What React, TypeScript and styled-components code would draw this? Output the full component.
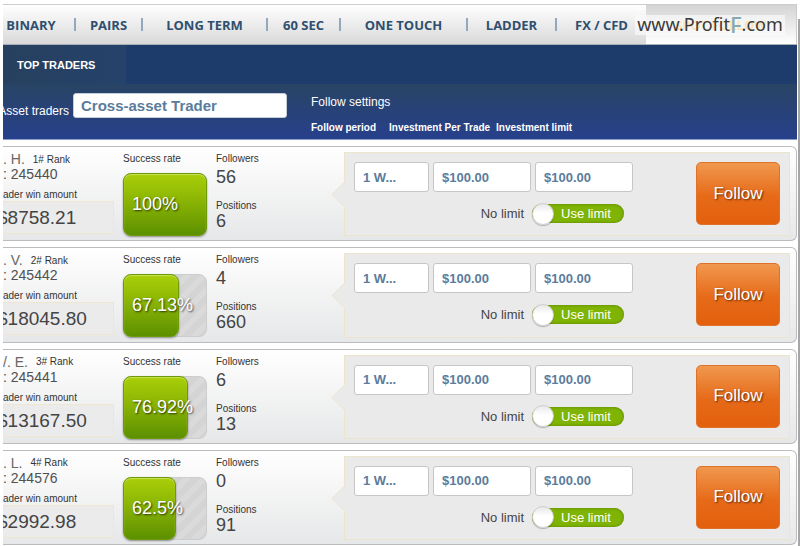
import React from "react";
import styled, { createGlobalStyle } from "styled-components";

const GlobalStyle = createGlobalStyle`
  * { box-sizing: border-box; }
  body {
    margin: 0;
    background: #fff;
    color: #444;
    font-family: "Liberation Sans", Arial, sans-serif;
  }
  button, input, select { font: inherit; margin: 0; }
`;

const Shell = styled.div`
  display: flex;
  min-height: 100vh;
  padding-left: 3px;
`;

const Page = styled.main`
  flex: 1;
  min-width: 0;
  display: flex;
  flex-direction: column;
  padding: 4px 0 1px;
  overflow: hidden;
`;

const Rail = styled.div`
  width: 2px;
  margin: 19px 0 0 1px;
  background: #a6a6a6;
`;

const Nav = styled.nav`
  position: relative;
  display: flex;
  height: 41px;
  border: solid #ccc;
  border-width: 1px 1px 1px 0;
  border-bottom-color: #a9b0b8;
  background: linear-gradient(#fff, #d9d9d9);
`;

const NavLink = styled.a<{ $grow: number }>`
  flex: ${(p) => p.$grow} 1 0;
  display: flex;
  align-items: center;
  color: #2f4f6e;
  font: 700 13px "Open Sans", sans-serif;
  white-space: nowrap;
  text-decoration: none;

  span { flex: 1; text-align: center; }
  &:first-child { margin-left: -15px; }
  &:not(:nth-last-of-type(2))::after {
    content: "";
    width: 2px;
    height: 13px;
    background: #93a8bf;
  }
`;

const ActiveLink = styled.a`
  flex: 150 1 0;
  display: flex;
  align-items: center;
  justify-content: center;
  background: linear-gradient(#d4d4d4, #fff);
  color: #f8b830;
  font: 700 13px "Open Sans", sans-serif;
  white-space: nowrap;
  text-decoration: none;
`;

const Watermark = styled.div`
  position: absolute;
  top: 10px;
  right: 11px;
  width: 150px;
  height: 20px;
  background: rgba(250, 250, 250, 0.68);
  color: #3a3a3a;
  font: 400 18px/18px "Noto Sans", sans-serif;
  text-align: center;
  white-space: nowrap;

  b {
    color: #86a9b3;
    font-size: 22px;
    font-weight: 500;
    line-height: 16px;
    vertical-align: -2px;
  }
`;

const TabStrip = styled.div`
  display: flex;
  height: 39px;
  background: #1d3c6c;
`;

const Tab = styled.a`
  display: flex;
  align-items: center;
  width: 123px;
  padding-left: 14px;
  background: linear-gradient(90deg, #27405f, #25426a);
  color: #fff;
  font-size: 11px;
  font-weight: 700;
  text-decoration: none;
  white-space: nowrap;
`;

const Filters = styled.section`
  display: flex;
  height: 56px;
  border-bottom: 1px solid #8c9cc8;
  background: linear-gradient(#284464, #27408c);
  color: #fff;
`;

const AssetFilter = styled.div`
  display: flex;
  width: 308px;
  gap: 4px;
  margin-left: -6px;
  padding-top: 9px;
  white-space: nowrap;

  label {
    width: 72px;
    padding-top: 11px;
    font-size: 12px;
    line-height: 14px;
    text-align: right;
  }
`;

const AssetSelect = styled.select`
  appearance: none;
  width: 214px;
  height: 25px;
  padding: 0 7px;
  border: 1px solid #c4ccd8;
  border-radius: 3px;
  background: #fff;
  color: #5b7c9c;
  font-size: 15px;
  font-weight: 700;
`;

const FollowSettings = styled.div`
  padding: 11px 0 0 6px;
  font-size: 12px;
  line-height: 14px;
`;

const SettingNames = styled.div`
  display: flex;
  margin-top: 13px;
  font-size: 10px;
  font-weight: 700;
  line-height: 12px;
  white-space: nowrap;

  span:nth-child(1) { width: 78px; }
  span:nth-child(2) { width: 107px; }
`;

const TraderList = styled.div`
  flex: 1;
  display: flex;
  flex-direction: column;
  gap: 6px;
  margin-top: 6px;
`;

const Row = styled.article`
  flex: 1 0 auto;
  display: flex;
  padding: 5px 6px 4px 0;
  border: solid #bcbcbc;
  border-width: 1px 1px 1px 0;
  border-radius: 0 6px 6px 0;
  background: linear-gradient(#fff, #e6e7e8);
`;

const Caption = styled.div`
  font-size: 10px;
  line-height: 13px;
  color: #333;
  white-space: nowrap;
`;

const Identity = styled.div`
  width: 111px;
  white-space: nowrap;
`;

const NameLine = styled.div`
  display: flex;
  gap: 8px;
  align-items: center;
  height: 14px;
  font-size: 14px;
  color: #666;
`;

const Account = styled.div`
  margin: 1px 0 6px;
  font-size: 14px;
  line-height: 15px;
  color: #505050;
`;

const WinAmount = styled.div`
  height: 33px;
  margin-left: -7px;
  border: 1px solid #efe6d0;
  background: #ebebec;
  font-size: 19px;
  line-height: 31px;
`;

const Success = styled.div`
  width: 84px;
  margin-left: 9px;
`;

const Meter = styled.div`
  position: relative;
  height: 63px;
  margin-top: 8px;
  border: 1px solid #cdcdcd;
  border-radius: 8px;
  background: repeating-linear-gradient(135deg, #d4d4d4 0 6px, #dadada 6px 12px);
`;

const MeterFill = styled.div`
  position: absolute;
  inset: -1px auto -1px -1px;
  border: 1px solid #6f9a08;
  border-radius: 8px;
  background: linear-gradient(#a9cf08, #8ab404 45%, #5c9000);
  box-shadow: inset 0 1px 1px #c9e25a, 0 1px 2px rgba(0, 0, 0, 0.4);
`;

const MeterValue = styled.span`
  position: absolute;
  inset: 0 auto 0 8px;
  display: flex;
  align-items: center;
  color: #fff;
  font-size: 18px;
  text-shadow: 1px 1px 2px rgba(0, 0, 0, 0.7);
`;

const Stats = styled.div`
  display: flex;
  flex-direction: column;
  gap: 13px;
  width: 137px;
  padding-left: 9px;
`;

const Figure = styled.div`
  margin-top: 3px;
  font-size: 18px;
  line-height: 18px;
  color: #444;
  white-space: nowrap;

  div:last-child > & { margin-top: 0; }
`;

const Panel = styled.div`
  position: relative;
  flex: 1;
  display: flex;
  justify-content: space-between;
  align-items: flex-start;
  padding: 9px 9px 0;
  border: 1px solid #ece4cc;
  background: #eaeaea;
`;

const Pointer = styled.svg`
  position: absolute;
  left: -14px;
  top: 28px;
  width: 14px;
  height: 27px;
`;

const Fields = styled.div`
  display: grid;
  grid-template-columns: 75px 98px 98px;
  gap: 11px 4px;
`;

const fieldStyle = `
  appearance: none;
  width: 100%;
  height: 30px;
  padding: 0 8px;
  border: 1px solid #c6c6c6;
  border-radius: 3px;
  background: #fff;
  color: #5b7c9c;
  font-size: 13px;
  font-weight: 700;
`;
const Period = styled.select`${fieldStyle}`;
const Amount = styled.input`${fieldStyle}`;

const Limit = styled.div`
  grid-column: 1 / -1;
  display: flex;
  justify-content: flex-end;
  align-items: center;
  gap: 8px;
  height: 21px;
  padding-right: 9px;
  font-size: 13px;
  color: #444;
`;

const Toggle = styled.label`
  display: flex;
  align-items: center;
  gap: 7px;
  width: 92px;
  height: 19px;
  border-radius: 10px;
  background: #80b404;
  box-shadow: inset 0 0 3px #527c00;
  color: #fff;
  white-space: nowrap;
`;

const Knob = styled.input`
  appearance: none;
  flex: none;
  width: 22px;
  height: 22px;
  border: 1px solid #d0d0d0;
  border-radius: 50%;
  background: linear-gradient(#e8e8e8, #fff 45%);
  box-shadow: 0 1px 1px rgba(0, 0, 0, 0.25);
`;

const FollowButton = styled.button`
  width: 84px;
  height: 63px;
  padding: 0;
  border: 1px solid #e0712a;
  border-radius: 5px;
  background: linear-gradient(#f0984f, #e66a18 55%, #e3600d);
  color: #fff;
  font-size: 17px;
  text-shadow: 1px 1px 2px rgba(60, 20, 0, 0.8);
`;

const NAV = [
  { label: "BINARY", grow: 88 },
  { label: "PAIRS", grow: 67 },
  { label: "LONG TERM", grow: 125 },
  { label: "60 SEC", grow: 73 },
  { label: "ONE TOUCH", grow: 127 },
  { label: "LADDER", grow: 89 },
  { label: "FX / CFD", grow: 89 },
];

const TRADERS = [
  { name: ". H.", rank: 1, account: "245440", win: "$8758.21", rate: 100, followers: 56, positions: 6 },
  { name: ". V.", rank: 2, account: "245442", win: "$18045.80", rate: 67.13, followers: 4, positions: 660 },
  { name: "/. E.", rank: 3, account: "245441", win: "$13167.50", rate: 76.92, followers: 6, positions: 13 },
  { name: ". L.", rank: 4, account: "244576", win: "$2992.98", rate: 62.5, followers: 0, positions: 91 },
];

type Trader = (typeof TRADERS)[number];

function TraderRow({ trader }: { trader: Trader }) {
  return (
    <Row>
      <Identity>
        <NameLine>
          {trader.name}
          <Caption>{trader.rank}# Rank</Caption>
        </NameLine>
        <Account>: {trader.account}</Account>
        <Caption>ader win amount</Caption>
        <WinAmount>{trader.win}</WinAmount>
      </Identity>
      <Success>
        <Caption>Success rate</Caption>
        <Meter
          role="progressbar"
          aria-label="Success rate"
          aria-valuenow={trader.rate}
          aria-valuemin={0}
          aria-valuemax={100}
        >
          <MeterFill style={{ width: `calc(${trader.rate}% + ${trader.rate / 50}px)` }} />
          <MeterValue>{trader.rate}%</MeterValue>
        </Meter>
      </Success>
      <Stats>
        <div>
          <Caption>Followers</Caption>
          <Figure>{trader.followers}</Figure>
        </div>
        <div>
          <Caption>Positions</Caption>
          <Figure>{trader.positions}</Figure>
        </div>
      </Stats>
      <Panel>
        <Pointer viewBox="0 0 14 27" aria-hidden="true">
          <path d="M14 0.5 L1 13.5 L14 26.5" fill="#eaeaea" stroke="#ece4cc" />
        </Pointer>
        <Fields>
          <Period aria-label="Follow period">
            <option>1 W...</option>
          </Period>
          <Amount aria-label="Investment Per Trade" defaultValue="$100.00" />
          <Amount aria-label="Investment limit" defaultValue="$100.00" />
          <Limit>
            <span>No limit</span>
            <Toggle>
              <Knob type="checkbox" defaultChecked />
              Use limit
            </Toggle>
          </Limit>
        </Fields>
        <FollowButton type="button">Follow</FollowButton>
      </Panel>
    </Row>
  );
}

export default function App() {
  return (
    <Shell>
      <GlobalStyle />
      <Page>
        <Nav>
          {NAV.map((item) => (
            <NavLink key={item.label} href="#" $grow={item.grow}>
              <span>{item.label}</span>
            </NavLink>
          ))}
          <ActiveLink href="#">SPOT FOLLOW</ActiveLink>
          <Watermark>
            www.Profit<b>F</b>.com
          </Watermark>
        </Nav>
        <TabStrip>
          <Tab href="#">TOP TRADERS</Tab>
        </TabStrip>
        <Filters>
          <AssetFilter>
            <label htmlFor="asset">Asset traders</label>
            <AssetSelect id="asset">
              <option>Cross-asset Trader</option>
            </AssetSelect>
          </AssetFilter>
          <FollowSettings>
            Follow settings
            <SettingNames>
              <span>Follow period</span>
              <span>Investment Per Trade</span>
              <span>Investment limit</span>
            </SettingNames>
          </FollowSettings>
        </Filters>
        <TraderList>
          {TRADERS.map((trader) => (
            <TraderRow key={trader.rank} trader={trader} />
          ))}
        </TraderList>
      </Page>
      <Rail />
    </Shell>
  );
}
